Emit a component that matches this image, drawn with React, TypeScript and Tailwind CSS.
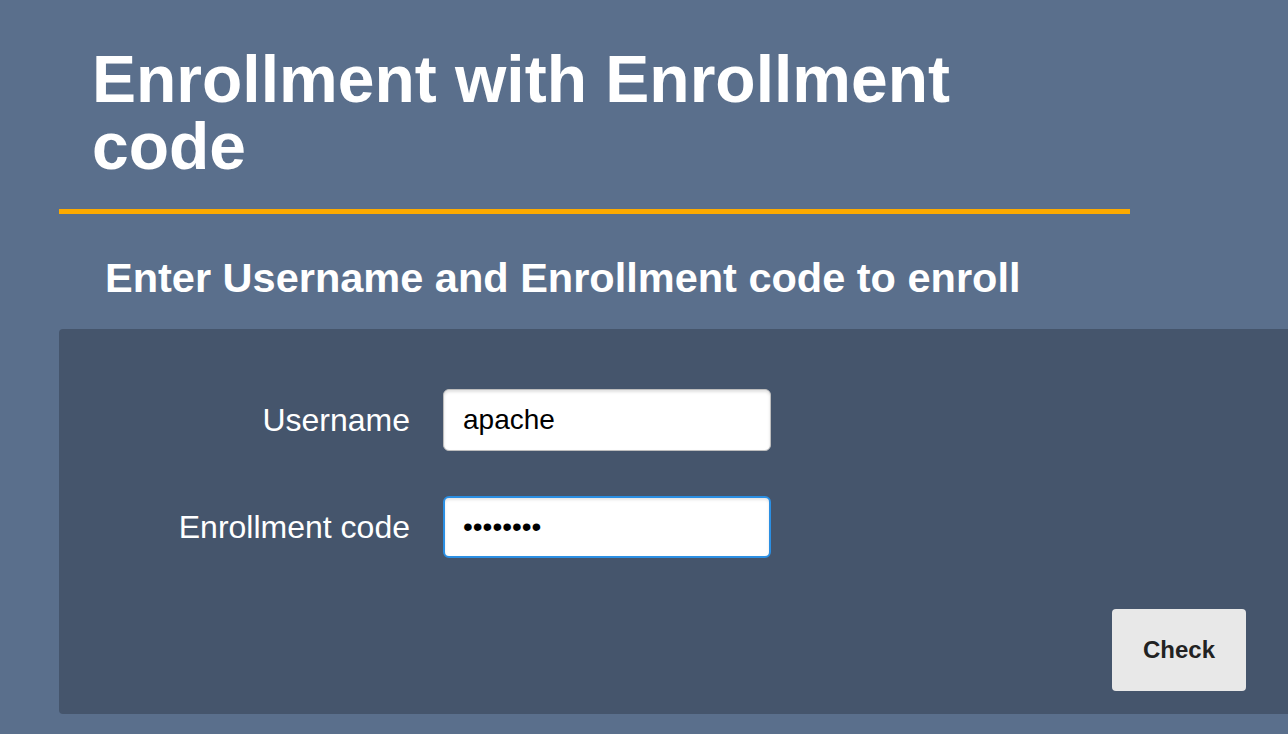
export default function App() {
    return (
        <div className="min-h-screen w-full overflow-hidden bg-[#5a6f8c] font-['Liberation_Sans',Arial,sans-serif]">
            <div className="pl-[59px] pt-[46px]">
                {/* Title */}
                <h1 className="pl-[33px] w-[960px] text-[66px] leading-[67px] font-bold text-white">
                    Enrollment with Enrollment code
                </h1>
                <div className="mt-[29px] h-[5px] w-[1071px] bg-[#fcaa00]" />

                <h2 className="mt-[40px] pl-[46px] text-[41.5px] leading-[48px] font-bold text-white whitespace-nowrap">
                    Enter Username and Enrollment code to enroll
                </h2>

                {/* Form panel */}
                <div className="mt-[27px] w-[1240px] rounded-[4px] bg-[#45556c] pt-[60px] pb-[23px] pr-[53px]">
                    <div className="grid grid-cols-[351px_328px] gap-x-[33px] gap-y-[45px] items-center">
                        <label className="text-right text-[32px] text-white">Username</label>
                        <input
                            type="text"
                            defaultValue="apache"
                            className="h-[62px] w-[328px] rounded-[6px] border border-[#bdbdbd] bg-white px-[19px] text-[28px] text-black shadow-[inset_0_2px_3px_rgba(0,0,0,0.12)] outline-none"
                        />
                        <label className="text-right text-[32px] text-white">Enrollment code</label>
                        <input
                            type="password"
                            defaultValue="abcdefgh"
                            className="h-[62px] w-[328px] rounded-[6px] border-2 border-[#2b8fe3] bg-white px-[18px] text-[28px] text-black shadow-[inset_0_2px_3px_rgba(0,0,0,0.1)] outline-none"
                        />
                    </div>
                    <div className="mt-[51px] flex justify-end">
                        <button className="h-[82px] w-[134px] rounded-[4px] bg-[#e8e8e8] text-[24px] font-bold text-[#222]">
                            Check
                        </button>
                    </div>
                </div>
            </div>
        </div>
    );
}
